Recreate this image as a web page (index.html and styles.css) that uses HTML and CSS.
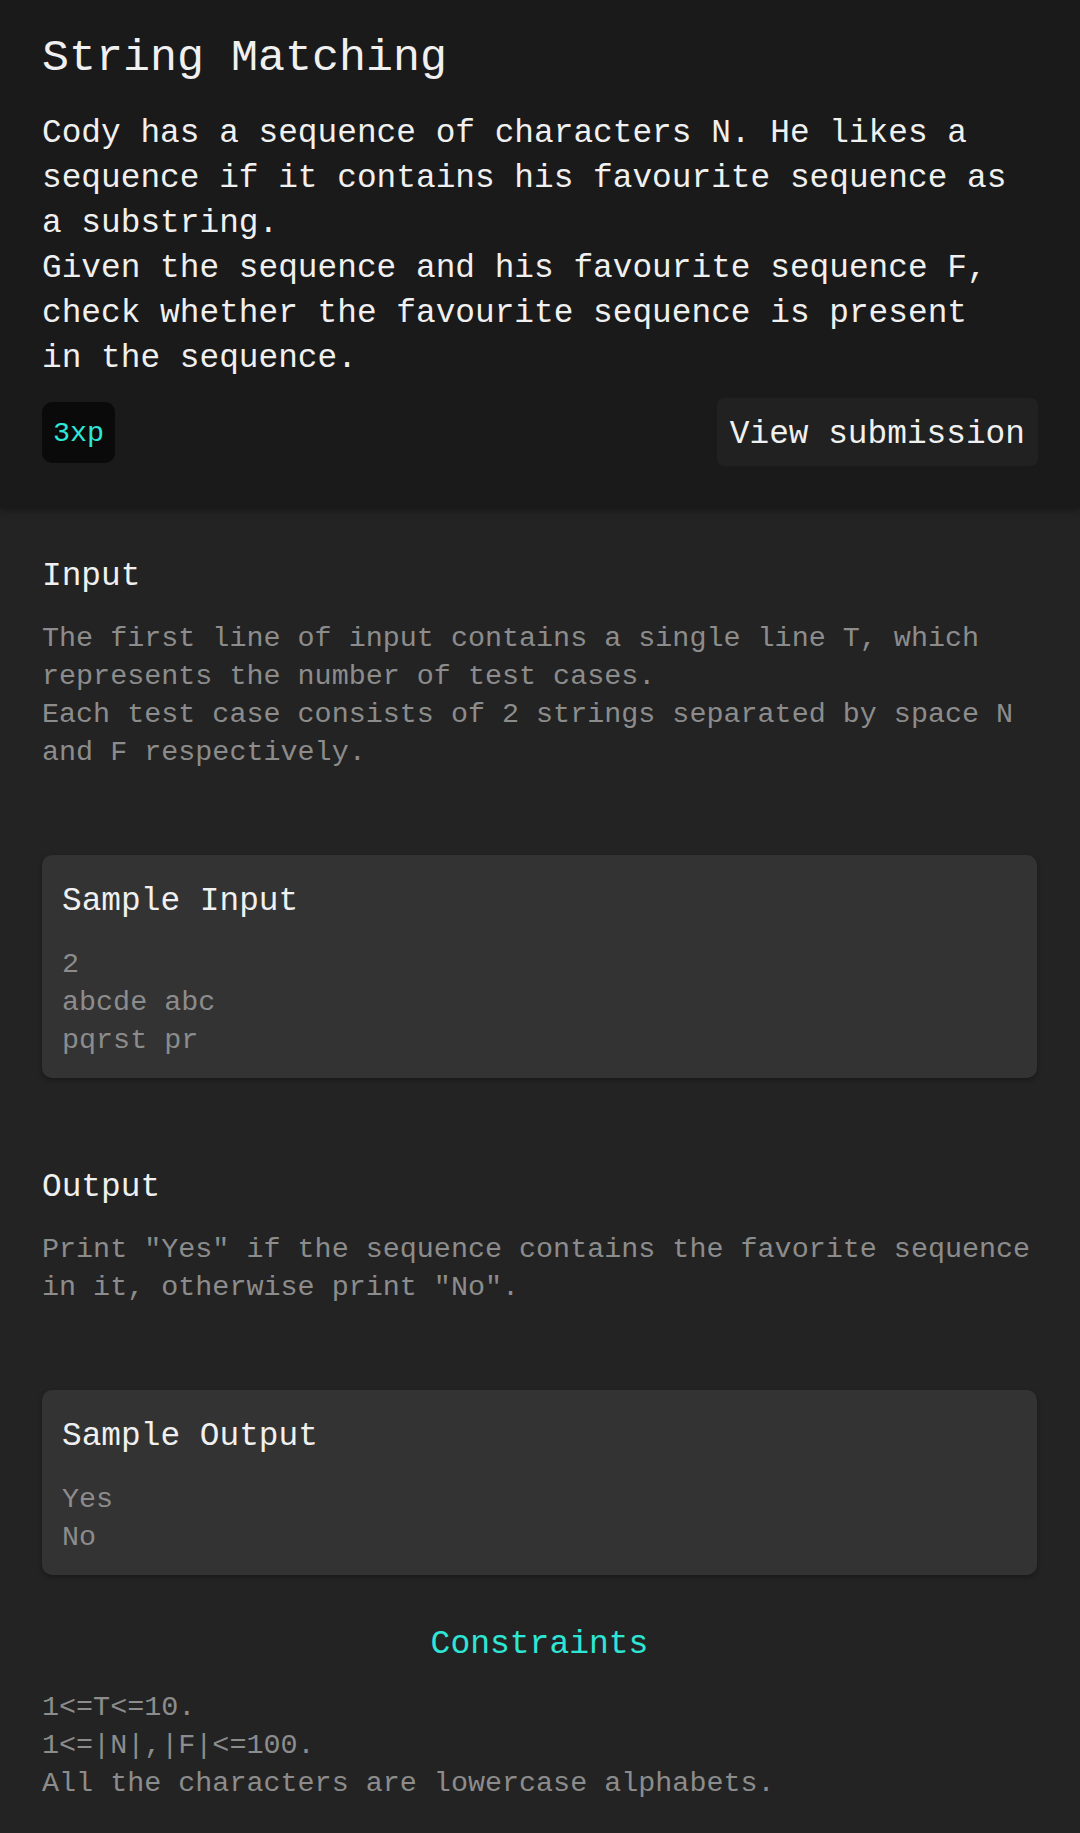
FILE: index.html
```html
<!DOCTYPE html>
<html lang="en">
<head>
<meta charset="utf-8">
<title>String Matching</title>
<link rel="stylesheet" href="styles.css">
</head>
<body>
<header class="problem-header">
  <h1 class="title">String Matching</h1>
  <p class="statement">Cody has a sequence of characters N. He likes a sequence if it contains his favourite sequence as a substring.<br>Given the sequence and his favourite sequence F, check whether the favourite sequence is present in the sequence.</p>
  <div class="meta-row">
    <span class="xp-badge">3xp</span>
    <span class="submission-btn">View submission</span>
  </div>
</header>
<main class="problem-body">
  <section class="block">
    <h2 class="block-title">Input</h2>
    <p class="block-text">The first line of input contains a single line T, which represents the number of test cases.<br>Each test case consists of 2 strings separated by space N and F respectively.</p>
    <div class="sample-card">
      <h3 class="sample-title">Sample Input</h3>
      <pre class="sample-text">2
abcde abc
pqrst pr</pre>
    </div>
  </section>
  <section class="block block-spaced">
    <h2 class="block-title">Output</h2>
    <p class="block-text">Print "Yes" if the sequence contains the favorite sequence in it, otherwise print "No".</p>
    <div class="sample-card">
      <h3 class="sample-title">Sample Output</h3>
      <pre class="sample-text">Yes
No</pre>
    </div>
  </section>
  <section class="constraints">
    <h2 class="constraints-title">Constraints</h2>
    <p class="constraints-text">1&lt;=T&lt;=10.<br>1&lt;=|N|,|F|&lt;=100.<br>All the characters are lowercase alphabets.</p>
  </section>
</main>
</body>
</html>
```

FILE: styles.css
```css
html, body {
  margin: 0;
  padding: 0;
}

body {
  background: #232323;
  font-family: "Liberation Mono", "DejaVu Sans Mono", monospace;
  color: #f0f0f0;
  min-height: 1833px;
}

h1, h2, h3, p, pre {
  margin: 0;
  font-weight: normal;
}

.problem-header {
  position: relative;
  z-index: 1;
  background: #1a1a1a;
  padding: 33px 42px 41px 42px;
  box-shadow: 0 3px 7px rgba(0, 0, 0, 0.35);
}

.title {
  font-size: 45px;
  line-height: 52px;
  color: #f0f0f0;
}

.statement {
  margin-top: 26px;
  margin-right: 16px;
  font-size: 32.8px;
  line-height: 45px;
  color: #f0f0f0;
}

.meta-row {
  margin-top: 17px;
  display: flex;
  justify-content: space-between;
  align-items: center;
}

.xp-badge {
  box-sizing: border-box;
  height: 61px;
  padding: 3px 11px 0;
  display: flex;
  align-items: center;
  background: #0a0a0a;
  border-radius: 10px;
  color: #2ee6d6;
  font-size: 28.4px;
  line-height: 38px;
}

.submission-btn {
  box-sizing: border-box;
  height: 68px;
  padding: 4px 13px 0;
  display: flex;
  align-items: center;
  background: #212121;
  border-radius: 7px;
  color: #f0f0f0;
  font-size: 32.8px;
  line-height: 45px;
}

.problem-body {
  padding: 47px 43px 30px 42px;
}

.block-spaced {
  margin-top: 87px;
}

.block-title {
  font-size: 32.8px;
  line-height: 45px;
  color: #f0f0f0;
}

.block-text {
  margin-top: 21px;
  font-size: 28.4px;
  line-height: 38px;
  color: #8c8c8c;
}

.sample-card {
  margin-top: 83px;
  background: #333333;
  border-radius: 10px;
  padding: 24px 20px 18px;
  box-shadow: 0 2px 5px rgba(0, 0, 0, 0.3);
}

.sample-title {
  font-size: 32.8px;
  line-height: 45px;
  color: #f0f0f0;
}

.sample-text {
  margin-top: 22px;
  font-family: "Liberation Mono", "DejaVu Sans Mono", monospace;
  font-size: 28.4px;
  line-height: 38px;
  color: #8c8c8c;
}

.constraints {
  margin-top: 47px;
}

.constraints-title {
  text-align: center;
  font-size: 33px;
  line-height: 45px;
  color: #2ee6d6;
}

.constraints-text {
  margin-top: 22px;
  font-size: 28.4px;
  line-height: 38px;
  color: #8c8c8c;
}
```
